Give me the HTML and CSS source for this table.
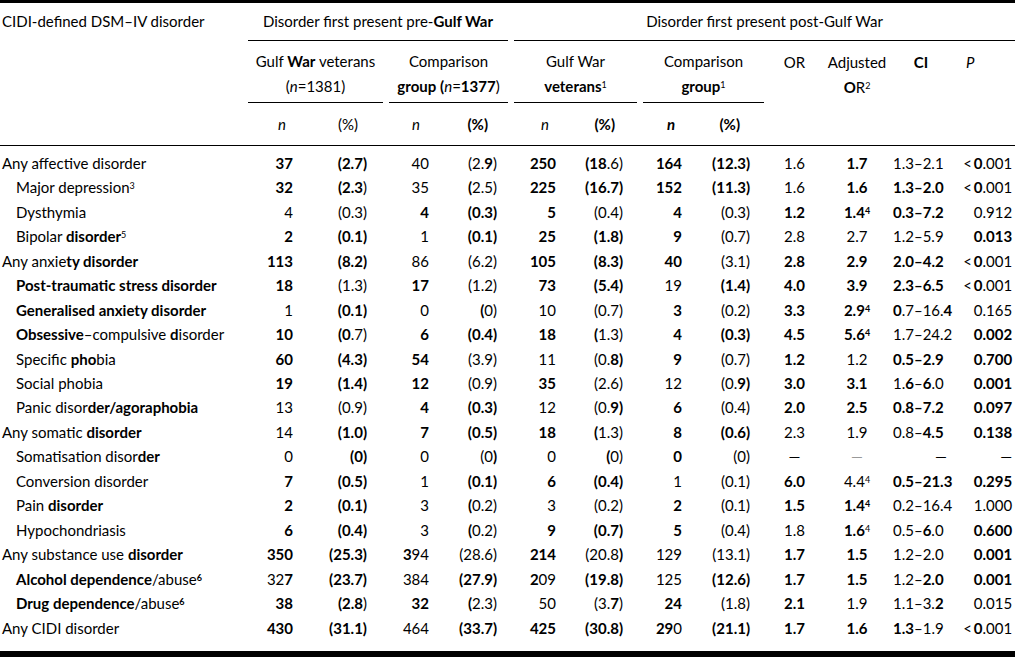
FILE: index.html
```html
<!DOCTYPE html>
<html lang="en">
<head>
<meta charset="utf-8">
<title>CIDI-defined DSM–IV disorders</title>
<link rel="stylesheet" href="styles.css">
</head>
<body>
<table class="t">
<colgroup>
<col class="c-lab"><col class="c-n1"><col class="c-p1"><col class="c-n2"><col class="c-p2"><col class="c-n3"><col class="c-p3"><col class="c-n4"><col class="c-p4"><col class="c-or"><col class="c-aor"><col class="c-ci"><col class="c-pv">
</colgroup>
<thead>
<tr class="h1">
<th rowspan="3" class="hlab">CIDI-defined DSM–IV disorder</th>
<th colspan="4" class="grp"><div class="rule in-pre">Disorder first present pre-<b>Gulf War</b></div></th>
<th colspan="8" class="grp"><div class="rule in-post">Disorder first present post-Gulf War</div></th>
</tr>
<tr class="h2">
<th colspan="2" class="sg"><div class="rule2">Gulf <b>War</b> veterans<br>(<i>n</i>=1381)</div></th>
<th colspan="2" class="sg"><div class="rule2">Comparison<br><b>group</b> <b>(</b><i>n</i>=<b>1377</b>)</div></th>
<th colspan="2" class="sg"><div class="rule2">Gulf War<br><b>veterans</b><sup>1</sup></div></th>
<th colspan="2" class="sg"><div class="rule2">Comparison<br><b>group</b><sup>1</sup></div></th>
<th rowspan="2" class="hs h-or">OR</th>
<th rowspan="2" class="hs h-aor">Adjusted<br><b>O</b>R<sup>2</sup></th>
<th rowspan="2" class="hs h-ci"><b>CI</b></th>
<th rowspan="2" class="hs h-pv"><i>P</i></th>
</tr>
<tr class="h3">
<th class="hn n1"><i>n</i></th><th class="hp p1">(%)</th>
<th class="hn n2"><i>n</i></th><th class="hp p2"><b>(%)</b></th>
<th class="hn n3"><i>n</i></th><th class="hp p3"><b>(%)</b></th>
<th class="hn n4"><b><i>n</i></b></th><th class="hp p4"><b>(%)</b></th>
</tr>
</thead>
<tbody>
<tr><td class="lab">Any affective disorder</td><td><b>37</b></td><td><b>(2.7)</b></td><td>40</td><td>(2.<b>9</b>)</td><td><b>250</b></td><td><b>(18</b>.6)</td><td><b>164</b></td><td><b>(12.3)</b></td><td>1.6</td><td><b>1.7</b></td><td>1.3–2.1</td><td>&lt;&#8201;<b>0</b>.001</td></tr>
<tr><td class="lab sub">Major depression<sup>3</sup></td><td><b>32</b></td><td><b>(2.3</b>)</td><td>35</td><td><b>(</b>2.5)</td><td><b>225</b></td><td><b>(16.7)</b></td><td><b>152</b></td><td><b>(11.3)</b></td><td>1.6</td><td><b>1.6</b></td><td><b>1.3–2.0</b></td><td>&lt;&#8201;<b>0</b>.001</td></tr>
<tr><td class="lab sub">Dysthymia</td><td>4</td><td>(0.3)</td><td><b>4</b></td><td><b>(0.3)</b></td><td><b>5</b></td><td>(0.4)</td><td><b>4</b></td><td>(0.3)</td><td><b>1.2</b></td><td><b>1.4<sup>4</sup></b></td><td><b>0.3–7.2</b></td><td>0.912</td></tr>
<tr><td class="lab sub">Bipolar <b>disorder</b><sup>5</sup></td><td><b>2</b></td><td><b>(0.1)</b></td><td>1</td><td><b>(0.1)</b></td><td><b>25</b></td><td><b>(1.8)</b></td><td><b>9</b></td><td>(0.7)</td><td>2.8</td><td>2.7</td><td>1.2–5.9</td><td><b>0.013</b></td></tr>
<tr><td class="lab">Any anxie<b>ty disorder</b></td><td><b>113</b></td><td><b>(8.2)</b></td><td>86</td><td>(6.2)</td><td><b>105</b></td><td><b>(8.3)</b></td><td><b>40</b></td><td>(3.1)</td><td><b>2.8</b></td><td><b>2.9</b></td><td><b>2.0–4.2</b></td><td>&lt;&#8201;<b>0</b>.001</td></tr>
<tr><td class="lab sub"><b>Post-traumatic stress disorder</b></td><td><b>18</b></td><td>(1.3)</td><td><b>17</b></td><td>(1.2)</td><td><b>73</b></td><td><b>(5.4)</b></td><td>19</td><td><b>(1.4)</b></td><td><b>4.0</b></td><td><b>3.9</b></td><td><b>2.3–6.5</b></td><td>&lt;&#8201;<b>0</b>.001</td></tr>
<tr><td class="lab sub"><b>Generalised anxiety disorder</b></td><td>1</td><td><b>(0.1)</b></td><td>0</td><td><b>(</b>0)</td><td>10</td><td>(0.7)</td><td><b>3</b></td><td>(0.2)</td><td><b>3.3</b></td><td><b>2.9<sup>4</sup></b></td><td><b>0</b>.7–16.<b>4</b></td><td>0.165</td></tr>
<tr><td class="lab sub"><b>Obsessive</b>–compulsive <b>d</b>isorder</td><td><b>10</b></td><td><b>(0</b>.7)</td><td><b>6</b></td><td><b>(0.4)</b></td><td><b>18</b></td><td><b>(</b>1.3)</td><td><b>4</b></td><td><b>(0.3)</b></td><td><b>4.5</b></td><td><b>5.6<sup>4</sup></b></td><td>1.7–24.2</td><td><b>0.002</b></td></tr>
<tr><td class="lab sub">Specific <b>pho</b>bia</td><td><b>60</b></td><td><b>(4.3)</b></td><td><b>54</b></td><td>(3.9)</td><td>11</td><td>(0.<b>8)</b></td><td><b>9</b></td><td>(0.7)</td><td><b>1.2</b></td><td>1.2</td><td><b>0.5–2.9</b></td><td><b>0.700</b></td></tr>
<tr><td class="lab sub">Social phobia</td><td><b>19</b></td><td><b>(1.4)</b></td><td><b>12</b></td><td>(0.9)</td><td><b>35</b></td><td>(2.6)</td><td>12</td><td>(0.<b>9)</b></td><td><b>3.0</b></td><td><b>3.1</b></td><td>1.<b>6</b>–<b>6</b>.0</td><td><b>0.001</b></td></tr>
<tr><td class="lab sub">Panic disor<b>der/agoraphobia</b></td><td>13</td><td>(0.9)</td><td><b>4</b></td><td><b>(0.3)</b></td><td>12</td><td>(0.<b>9)</b></td><td><b>6</b></td><td>(0.4)</td><td><b>2.0</b></td><td><b>2.5</b></td><td><b>0.8–7.2</b></td><td><b>0.097</b></td></tr>
<tr><td class="lab">Any somatic <b>disorder</b></td><td>14</td><td><b>(1.0)</b></td><td><b>7</b></td><td><b>(0.5)</b></td><td><b>18</b></td><td><b>(</b>1.3)</td><td><b>8</b></td><td><b>(0.6)</b></td><td>2.3</td><td>1.9</td><td>0.8–<b>4.5</b></td><td><b>0.138</b></td></tr>
<tr><td class="lab sub">Somatisation disor<b>der</b></td><td>0</td><td><b>(0)</b></td><td>0</td><td>(0<b>)</b></td><td>0</td><td><b>(</b>0)</td><td><b>0</b></td><td>(0)</td><td>—</td><td class="dim">—</td><td class="dash">—</td><td>—</td></tr>
<tr><td class="lab sub">Conversion disorder</td><td><b>7</b></td><td><b>(0.5)</b></td><td>1</td><td><b>(0.1)</b></td><td><b>6</b></td><td><b>(0.4)</b></td><td>1</td><td>(0.1)</td><td><b>6.0</b></td><td>4.4<sup>4</sup></td><td><b>0.5–21.3</b></td><td><b>0.295</b></td></tr>
<tr><td class="lab sub">Pain <b>disorder</b></td><td><b>2</b></td><td><b>(0.1)</b></td><td>3</td><td><b>(</b>0.2)</td><td>3</td><td>(0.2)</td><td><b>2</b></td><td>(0.1)</td><td><b>1.5</b></td><td><b>1.4<sup>4</sup></b></td><td>0.2–16.4</td><td>1.000</td></tr>
<tr><td class="lab sub">Hypochondriasis</td><td><b>6</b></td><td><b>(0.4)</b></td><td>3</td><td><b>(</b>0.2)</td><td><b>9</b></td><td><b>(0.7)</b></td><td><b>5</b></td><td>(0.4)</td><td>1.8</td><td><b>1.6</b><sup>4</sup></td><td>0.5–<b>6</b>.0</td><td><b>0.600</b></td></tr>
<tr><td class="lab">Any substance use <b>disorder</b></td><td><b>350</b></td><td><b>(25.3)</b></td><td><b>3</b>94</td><td>(28.6)</td><td><b>214</b></td><td>(20.8<b>)</b></td><td>129</td><td>(13.1)</td><td><b>1.7</b></td><td><b>1.5</b></td><td>1.2–2.0</td><td><b>0.001</b></td></tr>
<tr><td class="lab sub"><b>Alcohol dependence</b>/abuse<sup><b>6</b></sup></td><td>32<b>7</b></td><td><b>(23.7)</b></td><td>384</td><td><b>(27.9)</b></td><td><b>2</b>09</td><td><b>(19.8)</b></td><td>125</td><td><b>(12.6)</b></td><td><b>1.7</b></td><td><b>1.5</b></td><td>1.2–<b>2.0</b></td><td><b>0.001</b></td></tr>
<tr><td class="lab sub"><b>Drug dependence</b>/abuse<sup><b>6</b></sup></td><td><b>38</b></td><td><b>(2.8</b>)</td><td><b>32</b></td><td><b>(</b>2.3)</td><td>50</td><td>(3.<b>7</b>)</td><td><b>24</b></td><td>(1.8)</td><td><b>2.1</b></td><td>1.9</td><td>1.1–3.<b>2</b></td><td>0.015</td></tr>
<tr class="last"><td class="lab">Any CIDI disorder</td><td><b>430</b></td><td><b>(31.1)</b></td><td>464</td><td><b>(33.7)</b></td><td><b>425</b></td><td><b>(30.8)</b></td><td><b>29</b>0</td><td><b>(21.1)</b></td><td><b>1.7</b></td><td><b>1.6</b></td><td><b>1.3</b>–1.9</td><td>&lt;&#8201;<b>0</b>.001</td></tr>
</tbody>
</table>
</body>
</html>
```
FILE: styles.css
```css
html, body {
  margin: 0;
  padding: 0;
  background: #fff;
}
body {
  width: 1015px;
  height: 658px;
  overflow: hidden;
  font-family: Lato, "Open Sans", "Liberation Sans", sans-serif;
  font-size: 15px;
  color: #000;
}
b { font-weight: 700; }
i { font-style: italic; }
sup {
  font-size: 0.6em;
  line-height: 0;
  vertical-align: 0.5em;
}

.t {
  width: 1015px;
  table-layout: fixed;
  border-collapse: separate;
  border-spacing: 0;
  border-top: 3px solid #000;
  border-bottom: 6px solid #000;
}
.c-lab { width: 245px; }
.c-n1 { width: 60px; }
.c-p1 { width: 81px; }
.c-n2 { width: 54px; }
.c-p2 { width: 71px; }
.c-n3 { width: 59px; }
.c-p3 { width: 70px; }
.c-n4 { width: 60px; }
.c-p4 { width: 67px; }
.c-or { width: 55px; }
.c-aor { width: 70px; }
.c-ci { width: 58px; }
.c-pv { width: 65px; }

th {
  font-weight: 400;
  padding: 0;
  vertical-align: top;
  white-space: nowrap;
}

/* header row 1 */
.hlab {
  text-align: left;
  padding-left: 2px;
  line-height: 37px;
  border-bottom: 1px solid #000;
}
.grp { text-align: center; }
.rule {
  height: 37px;
  line-height: 37px;
  border-bottom: 1px solid #000;
}
.in-pre { margin: 0 3px; }
.in-post { margin: 0 0 0 3px; }

/* header row 2 */
.sg { text-align: center; }
.rule2 {
  margin: 0 3px;
  padding-top: 7.5px;
  height: 53.5px;
  line-height: 25px;
  border-bottom: 1px solid #000;
}
.hs {
  padding-top: 8.5px;
  line-height: 25px;
  border-bottom: 1px solid #000;
}
.h-or, .h-aor, .h-ci { text-align: center; }
.h-pv { text-align: left; padding-left: 16px; }

/* header row 3 */
.h3 th {
  height: 42px;
  line-height: 42px;
  text-align: right;
  border-bottom: 1px solid #000;
}
.hn.n1 { padding-right: 19px; }
.hp.p1 { padding-right: 28px; }
.hn.n2 { padding-right: 20px; }
.hp.p2 { padding-right: 23px; }
.hn.n3 { padding-right: 21px; }
.hp.p3 { padding-right: 25px; }
.hn.n4 { padding-right: 25px; }
.hp.p4 { padding-right: 27px; }

/* body */
td {
  padding: 0;
  height: 24.47px;
  line-height: 24.47px;
  white-space: nowrap;
  text-align: right;
  vertical-align: middle;
}
tbody tr:first-child td { padding-top: 4.8px; }
tbody tr.last td { padding-bottom: 11px; }

td.lab { text-align: left; padding-left: 2px; }
td.lab.sub { padding-left: 16px; }

tbody td:nth-child(2) { padding-right: 12px; }
tbody td:nth-child(3) { padding-right: 19px; }
tbody td:nth-child(4) { padding-right: 11px; }
tbody td:nth-child(5) { padding-right: 14px; }
tbody td:nth-child(6) { padding-right: 14px; }
tbody td:nth-child(7) { padding-right: 17px; }
tbody td:nth-child(8) { padding-right: 18px; }
tbody td:nth-child(9) { padding-right: 17px; }
tbody td:nth-child(10) { text-align: center; }
tbody td:nth-child(11) { text-align: center; }
tbody td:nth-child(12) { text-align: left; padding-left: 1px; }
tbody td:nth-child(13) { padding-right: 3px; }

td.dim { color: #999; }
tbody td.dash { text-align: right; padding-right: 3px; }
```
